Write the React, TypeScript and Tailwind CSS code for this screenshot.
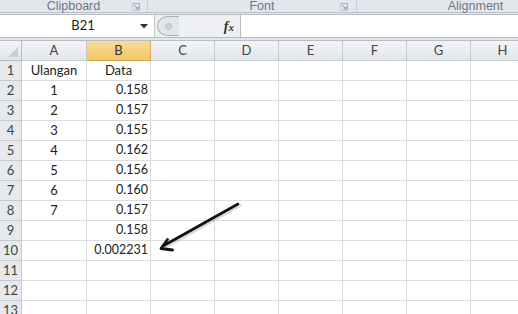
import React from "react";

const cols = ["A", "B", "C", "D", "E", "F", "G", "H"];
const colW = ["w-[65px]", "w-[64px]", "w-[64px]", "w-[64px]", "w-[64px]", "w-[64px]", "w-[64px]", "w-[64px]"];

const rows: { a?: string; b?: string }[] = [
  { a: "Ulangan", b: "Data" },
  { a: "1", b: "0.158" },
  { a: "2", b: "0.157" },
  { a: "3", b: "0.155" },
  { a: "4", b: "0.162" },
  { a: "5", b: "0.156" },
  { a: "6", b: "0.160" },
  { a: "7", b: "0.157" },
  { b: "0.158" },
  { b: "0.002231" },
  {},
  {},
  {},
];

function Launcher() {
  return (
    <svg width="8" height="8" viewBox="0 0 8 8" className="shrink-0">
      <path d="M0.5 0.5h7v7" fill="none" stroke="#a9b1bc" strokeWidth="1" />
      <path d="M0.5 0.5v7h7" fill="none" stroke="#c4cad2" strokeWidth="1" />
      <path d="M2 2l4 4M6 3.5V6H3.5" fill="none" stroke="#8a95a3" strokeWidth="1" />
    </svg>
  );
}

export default function App() {
  return (
    <div className="relative w-[518px] h-[314px] overflow-hidden bg-white font-['Lato','Liberation_Sans',sans-serif] text-[13px] text-[#222]">
      {/* ribbon group labels */}
      <div className="flex h-[13px] bg-[#e3e7ec] border-b border-[#b9c0c9] text-[12.5px] leading-[12px] text-[#6c7888] font-['Liberation_Sans',sans-serif]">
        <div className="relative flex w-[148px] items-end justify-center border-r border-[#c9ced6] -mt-[2px]">
          <span>Clipboard</span>
          <div className="absolute right-[7px] top-[5px]">
            <Launcher />
          </div>
        </div>
        <div className="relative flex w-[209px] items-end justify-center border-r border-[#c9ced6] -mt-[2px]">
          <span className="ml-[20px]">Font</span>
          <div className="absolute right-[8px] top-[5px]">
            <Launcher />
          </div>
        </div>
        <div className="flex flex-1 items-end justify-center -mt-[2px]">
          <span className="ml-[76px]">Alignment</span>
        </div>
      </div>

      {/* formula bar */}
      <div className="bg-[#e4e8ed] pt-px pb-[2px]">
        <div className="flex h-[24px] border-y border-[#b4bbc5] bg-white">
          <div className="flex w-[155px] items-center border-r border-[#c3c8cf]">
            <span className="flex-1 text-center pl-[26px]">B21</span>
            <svg width="9" height="5" viewBox="0 0 9 5" className="mr-[5px]">
              <path d="M0 0h8l-4 4.5z" fill="#333" />
            </svg>
          </div>
          <div className="flex w-[86px] items-center bg-[#eef0f3] border-r border-[#b4bbc5]">
            <div className="flex h-[20px] w-[22px] items-center justify-center rounded-l-full border border-r-0 border-[#a8b0ba] bg-[#e2e5e9] ml-[2px]">
              <div className="h-[7px] w-[7px] rounded-full bg-[#cfd3d9] border border-[#b9bfc7]" />
            </div>
            <span className="ml-auto mr-[6px] font-['Liberation_Serif',serif] italic text-[14px] font-bold text-[#333]">
              f<span className="text-[11px]">x</span>
            </span>
          </div>
          <div className="flex-1" />
        </div>
      </div>

      {/* column headers */}
      <div className="flex h-[21px] border-t border-[#b8bec7]">
        <div className="relative w-[22px] shrink-0 border-r border-b border-[#b8bec7] bg-gradient-to-b from-[#f3f4f6] to-[#e2e5e9]">
          <svg width="10" height="10" viewBox="0 0 10 10" className="absolute right-[3px] bottom-[3px]">
            <path d="M10 0v10H0z" fill="#c9ced4" />
          </svg>
        </div>
        {cols.map((c, i) => (
          <div
            key={c}
            className={`${colW[i]} shrink-0 flex items-center justify-center border-r border-b ${
              c === "B"
                ? "bg-gradient-to-b from-[#f9dc9a] to-[#f3c566] border-[#d9a94a] text-[#333]"
                : "bg-gradient-to-b from-[#f3f4f6] to-[#e3e6ea] border-[#c5cad1] text-[#444]"
            }`}
          >
            {c}
          </div>
        ))}
      </div>

      {/* rows */}
      {rows.map((r, i) => (
        <div key={i} className="flex h-[20px]">
          <div className="w-[22px] shrink-0 flex items-center justify-center border-r border-b border-[#c5cad1] bg-[#e6e9ed] text-[#444]">
            {i + 1}
          </div>
          {cols.map((c, j) => (
            <div
              key={c}
              className={`${colW[j]} shrink-0 flex items-center border-r border-b border-[#dadcdd] ${
                j === 1 && i > 0 ? "justify-end pr-[2px] text-[12.5px]" : "justify-center"
              }`}
            >
              {j === 0 ? r.a : j === 1 ? r.b : null}
            </div>
          ))}
        </div>
      ))}

      {/* annotation arrow */}
      <svg className="absolute left-0 top-0" width="518" height="314" viewBox="0 0 518 314">
        <line x1="239" y1="204" x2="164" y2="246" stroke="#999" strokeWidth="3" strokeLinecap="round" opacity="0.35" transform="translate(1 1.5)" />
        <line x1="238" y1="204" x2="163" y2="246" stroke="#111" strokeWidth="2.6" strokeLinecap="round" />
        <path d="M161 248.5 L167.5 239.5 M161 248.5 L172.5 250" stroke="#111" strokeWidth="2.8" strokeLinecap="round" fill="none" />
      </svg>
    </div>
  );
}
